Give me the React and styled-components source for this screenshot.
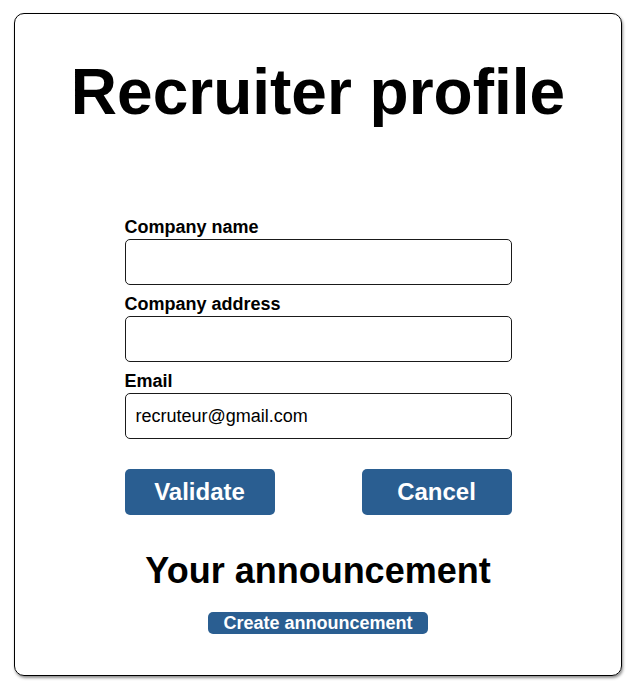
import React from "react";
import styled, { createGlobalStyle } from "styled-components";

const GlobalStyle = createGlobalStyle`
  html, body {
    margin: 0;
    padding: 0;
    background: #ffffff;
    font-family: "Liberation Sans", Arial, sans-serif;
    color: #000000;
  }
`;

const Page = styled.div`
  padding: 13px 13px 11px 14px;
`;

const Card = styled.main`
  border: 1px solid #000000;
  border-radius: 10px;
  box-shadow: 1px 2px 3px rgba(0, 0, 0, 0.45);
  padding: 41px 0 41px;
  display: flex;
  flex-direction: column;
  align-items: center;
`;

const Title = styled.h1`
  margin: 0;
  font-size: 64px;
  line-height: 74px;
  font-weight: 700;
  text-align: center;
`;

const Form = styled.form`
  width: 387px;
  margin-top: 88px;
  display: flex;
  flex-direction: column;
  gap: 9px;
`;

const Field = styled.div`
  display: flex;
  flex-direction: column;
  gap: 1px;
`;

const Label = styled.label`
  font-size: 18px;
  line-height: 21px;
  font-weight: 700;
`;

const Input = styled.input`
  box-sizing: border-box;
  height: 46px;
  width: 100%;
  border: 1px solid #1a1a1a;
  border-radius: 5px;
  padding: 0 10px;
  font-family: "Liberation Sans", Arial, sans-serif;
  font-size: 18px;
  color: #000000;
  background: #ffffff;
  outline: none;
`;

const ButtonRow = styled.div`
  display: flex;
  justify-content: space-between;
  margin-top: 21px;
`;

const Button = styled.button`
  box-sizing: border-box;
  width: ${(p) => (p.$wide ? "220px" : "150px")};
  height: ${(p) => (p.$small ? "22px" : "46px")};
  border: none;
  border-radius: 5px;
  background: #2a5e91;
  color: #ffffff;
  font-family: "Liberation Sans", Arial, sans-serif;
  font-weight: 700;
  font-size: ${(p) => (p.$small ? "18px" : "24px")};
  line-height: 1;
  padding: 0;
  cursor: pointer;
`;

const SubTitle = styled.h2`
  margin: 35px 0 0;
  font-size: 36px;
  line-height: 42px;
  font-weight: 700;
  text-align: center;
`;

const CreateWrap = styled.div`
  margin-top: 20px;
  display: flex;
  justify-content: center;
`;

export default function App() {
  return (
    <>
      <GlobalStyle />
      <Page>
        <Card>
          <Title>Recruiter profile</Title>
          <Form onSubmit={(e) => e.preventDefault()}>
            <Field>
              <Label htmlFor="cname">Company name</Label>
              <Input id="cname" type="text" />
            </Field>
            <Field>
              <Label htmlFor="caddr">Company address</Label>
              <Input id="caddr" type="text" />
            </Field>
            <Field>
              <Label htmlFor="email">Email</Label>
              <Input id="email" type="email" defaultValue="recruteur@gmail.com" />
            </Field>
            <ButtonRow>
              <Button type="submit">Validate</Button>
              <Button type="button">Cancel</Button>
            </ButtonRow>
          </Form>
          <SubTitle>Your announcement</SubTitle>
          <CreateWrap>
            <Button type="button" $wide $small>
              Create announcement
            </Button>
          </CreateWrap>
        </Card>
      </Page>
    </>
  );
}
